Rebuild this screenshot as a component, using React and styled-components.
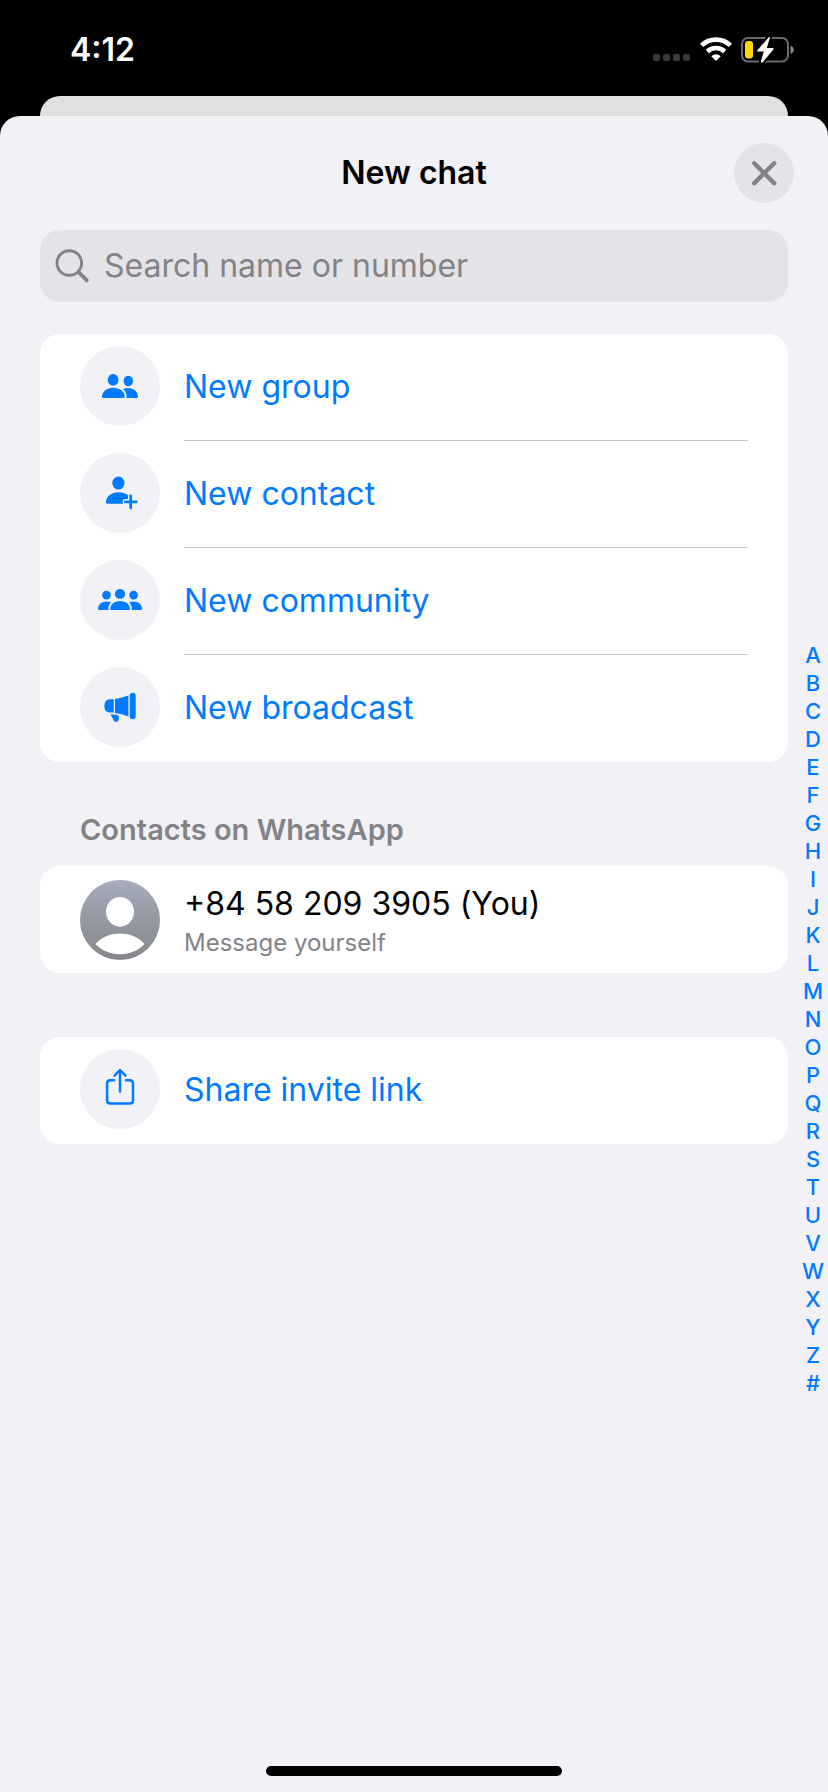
import React, { useState } from 'react'
import styled, { createGlobalStyle } from 'styled-components'

const BLUE = '#007aff'
const SHEET = '#f1f1f6'
const GREY = '#838387'
const LETTERS = 'ABCDEFGHIJKLMNOPQRSTUVWXYZ#'.split('')

const GlobalStyle = createGlobalStyle`
  * {
    box-sizing: border-box;
  }
  body {
    margin: 0;
    background: #000;
    font-family: Inter, "Liberation Sans", sans-serif;
  }
  button, input {
    font-family: inherit;
  }
`

const Screen = styled.div`
  display: flex;
  flex-direction: column;
  min-height: 100vh;
`

const StatusBar = styled.header`
  display: flex;
  align-items: center;
  justify-content: space-between;
  height: 96px;
  padding: 4px 34px 0 70px;
  color: #fff;
`

const Time = styled.time`
  font-size: 32px;
  font-weight: 600;
  line-height: 40px;
`

const StatusIcons = styled.div`
  display: flex;
  align-items: center;
  gap: 9px;
`

const BackSheet = styled.div`
  height: 20px;
  margin: 0 40px;
  border-radius: 20px 20px 0 0;
  background: #e0e0e0;
`

const Sheet = styled.main`
  display: flex;
  flex: 1;
  flex-direction: column;
  border-radius: 20px 20px 0 0;
  background: ${SHEET};
`

const TitleBar = styled.div`
  display: grid;
  grid-template-columns: 60px 1fr 60px;
  align-items: center;
  height: 114px;
  padding: 0 34px;
`

const Title = styled.h1`
  grid-column: 2;
  margin: 0;
  font-size: 32px;
  font-weight: 600;
  line-height: 40px;
  text-align: center;
`

const CloseButton = styled.button`
  width: 60px;
  height: 60px;
  padding: 0;
  border: none;
  border-radius: 50%;
  background: #e3e3e8;
`

const SearchBox = styled.label`
  display: flex;
  align-items: center;
  gap: 14px;
  height: 72px;
  margin: 0 40px;
  padding: 0 15px;
  border-radius: 20px;
  background: #e3e3e8;
`

const SearchInput = styled.input`
  flex: 1;
  min-width: 0;
  padding: 0;
  border: none;
  outline: none;
  background: none;
  font-size: 32px;
  line-height: 40px;
  &::placeholder {
    color: ${GREY};
    opacity: 1;
  }
`

const Body = styled.div`
  display: flex;
  flex: 1;
`

const Content = styled.div`
  flex: 1;
  min-width: 0;
  padding: 32px 0 0 40px;
`

const Card = styled.section`
  margin-bottom: ${props => props.$gap || 0}px;
  border-radius: 20px;
  background: #fff;
  overflow: hidden;
`

const Row = styled.button`
  display: flex;
  width: 100%;
  height: 107px;
  padding: 0 40px;
  gap: 24px;
  border: none;
  background: none;
  color: ${BLUE};
  text-align: left;
`

const IconCircle = styled.span`
  flex: none;
  width: 80px;
  height: 80px;
  margin-top: 12px;
  border-radius: 50%;
  background: #f2f2f6;
`

const AvatarHolder = styled(IconCircle)`
  margin-top: 14px;
  overflow: hidden;
`

const Label = styled.span`
  display: flex;
  flex: 1;
  flex-direction: column;
  justify-content: center;
  height: 107px;
  border-bottom: 1px solid ${props => (props.$divider ? '#c6c6c8' : 'transparent')};
  font-size: 32px;
  line-height: 40px;
`

const ContactLabel = styled(Label)`
  padding-top: 8px;
`

const Name = styled.span`
  color: #000;
`

const Note = styled.span`
  color: ${GREY};
  font-size: 24px;
  line-height: 38px;
`

const SectionTitle = styled.h2`
  margin: 0;
  padding: 48px 40px 16px;
  color: ${GREY};
  font-size: 29px;
  font-weight: 600;
  line-height: 40px;
`

const LetterIndex = styled.nav`
  display: flex;
  flex-direction: column;
  align-self: center;
  width: 40px;
  padding-left: 10px;
`

const Letter = styled.a`
  color: ${BLUE};
  font-size: 22px;
  font-weight: 500;
  line-height: 28px;
  text-align: center;
  text-decoration: none;
`

const HomeArea = styled.footer`
  height: 56px;
  padding-top: 30px;
`

const HomeBar = styled.div`
  width: 296px;
  height: 10px;
  margin: 0 auto;
  border-radius: 5px;
  background: #000;
`

const Svg = styled.svg`
  display: block;
`

const SignalDots = () => (
  <Svg width="38" height="26" viewBox="0 0 38 26" fill="#3a3a3a">
    {[0, 10, 20, 30].map(x => (
      <rect key={x} x={x} y="17" width="7" height="7" rx="2" />
    ))}
  </Svg>
)

const Wifi = () => (
  <Svg width="32" height="26" viewBox="0 0 32 26" fill="none" stroke="#fff" strokeWidth="4.6">
    <path d="M1.6 8.4 A20.8 20.8 0 0 1 30.4 8.4" />
    <path d="M7.3 14.5 A12.6 12.6 0 0 1 24.7 14.5" />
    <path d="M16 24 L11.3 19.2 A6.8 6.8 0 0 1 20.7 19.2 Z" fill="#fff" stroke="none" />
  </Svg>
)

const Battery = () => (
  <Svg width="53" height="26" viewBox="0 0 53 26">
    <rect x="1" y="1" width="46" height="23.5" rx="6" fill="none" stroke="#6b6b6b" strokeWidth="2" />
    <path d="M49.5 8.5 Q52.8 10 52.8 12.8 Q52.8 15.6 49.5 17 Z" fill="#858585" />
    <rect x="4" y="4" width="8" height="17.5" rx="3" fill="#ffd60a" />
    <path
      d="M28 0 L16.3 13.2 Q15.5 14.5 17 14.5 H22.8 L19.8 24.6 Q20.3 26.4 21.5 25.4 L32.4 12.4 Q33 11 31.5 11 H25.8 L28.8 1 Q29 -.8 28 0Z"
      fill="#fff"
      stroke="#000"
      strokeWidth="4"
      paintOrder="stroke"
    />
  </Svg>
)

const CloseIcon = () => (
  <Svg width="60" height="60" viewBox="0 0 60 60" stroke="#838387" strokeWidth="4.4" strokeLinecap="round">
    <path d="M20.2 20.2 L40.2 40.2 M40.2 20.2 L20.2 40.2" />
  </Svg>
)

const SearchIcon = () => (
  <Svg width="35" height="35" viewBox="0 0 35 35" fill="none" stroke="#838387" strokeLinecap="round">
    <circle cx="14.3" cy="14" r="12.3" strokeWidth="2.9" />
    <path d="M23.5 23 L31.8 31.4" strokeWidth="3.8" />
  </Svg>
)

const GroupIcon = () => (
  <Svg width="80" height="80" viewBox="0 0 80 80" fill={BLUE}>
    <ellipse cx="33.1" cy="33.8" rx="5.4" ry="5.9" />
    <ellipse cx="48.3" cy="35" rx="4.7" ry="5.2" />
    <path d="M22 50.5 C22 45.8 27 41.8 33.3 41.8 S44.7 45.8 44.7 50.5 Q44.7 52 43.2 52 H23.5 Q22 52 22 50.5Z" />
    <path d="M43 42.9 C44.6 42.2 46.3 41.9 48 41.9 C53.8 41.9 58 45.9 58 50.5 Q58 52 56.5 52 H46.3 C47.2 48.6 46 45.2 43 42.9Z" />
  </Svg>
)

const ContactIcon = () => (
  <Svg width="80" height="80" viewBox="0 0 80 80" fill={BLUE}>
    <ellipse cx="38.4" cy="30.1" rx="6.1" ry="6.5" />
    <path d="M26 49.2 C26 43.5 31.5 39.3 38.3 39.3 C42.8 39.3 46.5 40.8 49 43.2 V50.7 H27.5 Q26 50.7 26 49.2Z" />
    <path d="M50.7 42.9 V55 M45.4 48.8 H56.5" stroke="#f2f2f6" strokeWidth="5.4" strokeLinecap="round" />
    <path d="M50.7 42.9 V54.8 M45.4 48.8 H56.3" stroke={BLUE} strokeWidth="2.8" strokeLinecap="round" />
  </Svg>
)

const CommunityIcon = () => (
  <Svg width="80" height="80" viewBox="0 0 80 80" fill={BLUE}>
    <circle cx="40" cy="34" r="5.1" />
    <circle cx="26.5" cy="35.1" r="4.3" />
    <circle cx="53.6" cy="35.1" r="4.3" />
    <path d="M30.2 48.8 C30.2 44.6 34.5 41 40.1 41 S50 44.6 50 48.8 Q50 50 48.8 50 H31.4 Q30.2 50 30.2 48.8Z" />
    <path d="M31 42.4 C29.8 41.9 28.2 41.6 26.5 41.6 C21.6 41.6 18 44.8 18 48.8 Q18 50 19.2 50 H28.5 C28 47 28.8 44.3 31 42.4Z" />
    <path d="M49.1 42.4 C50.3 41.9 51.9 41.6 53.6 41.6 C58.5 41.6 62.1 44.8 62.1 48.8 Q62.1 50 60.9 50 H51.6 C52.1 47 51.3 44.3 49.1 42.4Z" />
  </Svg>
)

const BroadcastIcon = () => (
  <Svg width="80" height="80" viewBox="0 0 80 80" fill={BLUE}>
    <path d="M33.8 32.3 V45.6 H29.8 Q24.3 45.2 24.3 39 Q24.3 32.7 29.8 32.3Z" />
    <path d="M35 32 Q42 31 48.4 28.6 V49.4 Q42 46.8 35 45.9Z" />
    <rect x="49.7" y="25.7" width="6" height="26.6" rx="3" />
    <path d="M30.4 47.2 L37.3 47.9 Q39.3 48.3 39 50.3 L38.5 53 Q38 55.2 35.7 54.8 Q34.4 54.6 33.8 53.4Z" />
  </Svg>
)

const ShareIcon = () => (
  <Svg
    width="80"
    height="80"
    viewBox="0 0 80 80"
    fill="none"
    stroke={BLUE}
    strokeWidth="2.5"
    strokeLinecap="round"
    strokeLinejoin="round"
  >
    <path d="M34 31.2 H30.5 Q27.1 31.2 27.1 34.6 V51.2 Q27.1 54.6 30.5 54.6 H49.6 Q53 54.6 53 51.2 V34.6 Q53 31.2 49.6 31.2 H46" />
    <path d="M40 42.4 V21.6 M34.5 26.7 L40 21.2 L45.5 26.7" />
  </Svg>
)

const Avatar = () => (
  <Svg width="80" height="80" viewBox="0 0 80 80">
    <defs>
      <linearGradient id="avatar" x1="0" y1="0" x2="0" y2="1">
        <stop offset="0" stopColor="#a6abba" />
        <stop offset="1" stopColor="#84868b" />
      </linearGradient>
    </defs>
    <rect width="80" height="80" fill="url(#avatar)" />
    <ellipse cx="40" cy="31.8" rx="14" ry="14.9" fill="#fff" />
    <path d="M15.4 64 C21.5 57.2 30 53.4 40 53.4 S58.5 57.2 64.6 64 C58 70.6 50 74.2 40 74.2 S22 70.6 15.4 64Z" fill="#fff" />
  </Svg>
)

const actions = [
  { label: 'New group', Icon: GroupIcon },
  { label: 'New contact', Icon: ContactIcon },
  { label: 'New community', Icon: CommunityIcon },
  { label: 'New broadcast', Icon: BroadcastIcon },
]

const ActionRow = ({ label, Icon, divider }) => (
  <Row type="button">
    <IconCircle>
      <Icon />
    </IconCircle>
    <Label $divider={divider}>{label}</Label>
  </Row>
)

export default function App() {
  const [query, setQuery] = useState('')

  return (
    <Screen>
      <GlobalStyle />
      <StatusBar>
        <Time>4:12</Time>
        <StatusIcons>
          <SignalDots />
          <Wifi />
          <Battery />
        </StatusIcons>
      </StatusBar>
      <BackSheet />
      <Sheet>
        <TitleBar>
          <Title>New chat</Title>
          <CloseButton type="button" aria-label="Close">
            <CloseIcon />
          </CloseButton>
        </TitleBar>
        <SearchBox>
          <SearchIcon />
          <SearchInput
            type="text"
            aria-label="Search name or number"
            placeholder="Search name or number"
            value={query}
            onChange={e => setQuery(e.target.value)}
          />
        </SearchBox>
        <Body>
          <Content>
            <Card>
              {actions.map(({ label, Icon }, i) => (
                <ActionRow key={label} label={label} Icon={Icon} divider={i < actions.length - 1} />
              ))}
            </Card>
            <SectionTitle>Contacts on WhatsApp</SectionTitle>
            <Card $gap={64}>
              <Row type="button">
                <AvatarHolder>
                  <Avatar />
                </AvatarHolder>
                <ContactLabel>
                  <Name>+84 58 209 3905 (You)</Name>
                  <Note>Message yourself</Note>
                </ContactLabel>
              </Row>
            </Card>
            <Card>
              <ActionRow label="Share invite link" Icon={ShareIcon} />
            </Card>
          </Content>
          <LetterIndex aria-label="Contacts by letter">
            {LETTERS.map(letter => (
              <Letter key={letter} href={`#${letter}`}>{letter}</Letter>
            ))}
          </LetterIndex>
        </Body>
        <HomeArea>
          <HomeBar />
        </HomeArea>
      </Sheet>
    </Screen>
  )
}
